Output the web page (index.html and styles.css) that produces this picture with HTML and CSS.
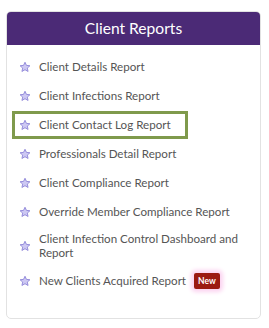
FILE: index.html
```html
<!DOCTYPE html>
<html lang="en">
<head>
	<meta charset="UTF-8">
	<title>Client Reports</title>
	<link rel="stylesheet" href="styles.css">
</head>
<body>
	<!-- reports card -->
	<div class="card">
		<div class="head">Client Reports</div>
		<ul class="list">
			<li><svg class="star" viewBox="0 0 24 24"><path d="M12 2.5l2.9 6.3 6.9.7-5.2 4.6 1.5 6.8L12 17.4l-6.1 3.5 1.5-6.8-5.2-4.6 6.9-.7z"/></svg><a href="">Client Details Report</a></li>
			<li><svg class="star" viewBox="0 0 24 24"><path d="M12 2.5l2.9 6.3 6.9.7-5.2 4.6 1.5 6.8L12 17.4l-6.1 3.5 1.5-6.8-5.2-4.6 6.9-.7z"/></svg><a href="">Client Infections Report</a></li>
			<li class="on"><svg class="star" viewBox="0 0 24 24"><path d="M12 2.5l2.9 6.3 6.9.7-5.2 4.6 1.5 6.8L12 17.4l-6.1 3.5 1.5-6.8-5.2-4.6 6.9-.7z"/></svg><a href="">Client Contact Log Report</a></li>
			<li><svg class="star" viewBox="0 0 24 24"><path d="M12 2.5l2.9 6.3 6.9.7-5.2 4.6 1.5 6.8L12 17.4l-6.1 3.5 1.5-6.8-5.2-4.6 6.9-.7z"/></svg><a href="">Professionals Detail Report</a></li>
			<li><svg class="star" viewBox="0 0 24 24"><path d="M12 2.5l2.9 6.3 6.9.7-5.2 4.6 1.5 6.8L12 17.4l-6.1 3.5 1.5-6.8-5.2-4.6 6.9-.7z"/></svg><a href="">Client Compliance Report</a></li>
			<li><svg class="star" viewBox="0 0 24 24"><path d="M12 2.5l2.9 6.3 6.9.7-5.2 4.6 1.5 6.8L12 17.4l-6.1 3.5 1.5-6.8-5.2-4.6 6.9-.7z"/></svg><a href="">Override Member Compliance Report</a></li>
			<li class="two"><svg class="star" viewBox="0 0 24 24"><path d="M12 2.5l2.9 6.3 6.9.7-5.2 4.6 1.5 6.8L12 17.4l-6.1 3.5 1.5-6.8-5.2-4.6 6.9-.7z"/></svg><a href="">Client Infection Control Dashboard and Report</a></li>
			<li><svg class="star" viewBox="0 0 24 24"><path d="M12 2.5l2.9 6.3 6.9.7-5.2 4.6 1.5 6.8L12 17.4l-6.1 3.5 1.5-6.8-5.2-4.6 6.9-.7z"/></svg><a href="">New Clients Acquired Report</a><span class="new">New</span></li>
		</ul>
	</div>
</body>
</html>
```

FILE: styles.css
```css
* {
	margin: 0;
	padding: 0;
	box-sizing: border-box;
}
body {
	background: #fff;
	font-family: Lato, "Open Sans", sans-serif;
	padding: 11px 8px 0 6px;
}
a {
	text-decoration: none;
	color: #555;
	font-size: 11.6px;
}
li {
	list-style: none;
}
.card {
	width: 255px;
	height: 308px;
	border: 1px solid #e2e2e2;
	border-radius: 5px;
	background: #fff;
}
.head {
	height: 33px;
	line-height: 33px;
	text-align: center;
	color: #fff;
	font-size: 15.6px;
	background: #4b2a76;
	border-radius: 4px 4px 0 0;
}
.list {
	padding: 7px 8px 0 5px;
}
.list li {
	display: flex;
	align-items: center;
	height: 29px;
	padding-left: 4px;
	border: 3px solid transparent;
	line-height: 14px;
}
.list li.on {
	border-color: #7f9a4c;
	width: 176px;
	height: 28px;
	margin: 1px 0 0;
}
.list li.two {
	height: 40px;
	padding-right: 0;
}
.star {
	flex: none;
	width: 12px;
	height: 12px;
	margin-right: 8px;
	fill: #cdc8f3;
	stroke: #958ddb;
	stroke-width: 2;
	stroke-linejoin: round;
}
.new {
	margin-left: 8px;
	padding: 1px 4px;
	font-size: 8.5px;
	font-weight: bold;
	color: #fff;
	background: #9b1b12;
	border-radius: 2px;
	box-shadow: 0 0 4px 3px #fbd3f0;
}
```
